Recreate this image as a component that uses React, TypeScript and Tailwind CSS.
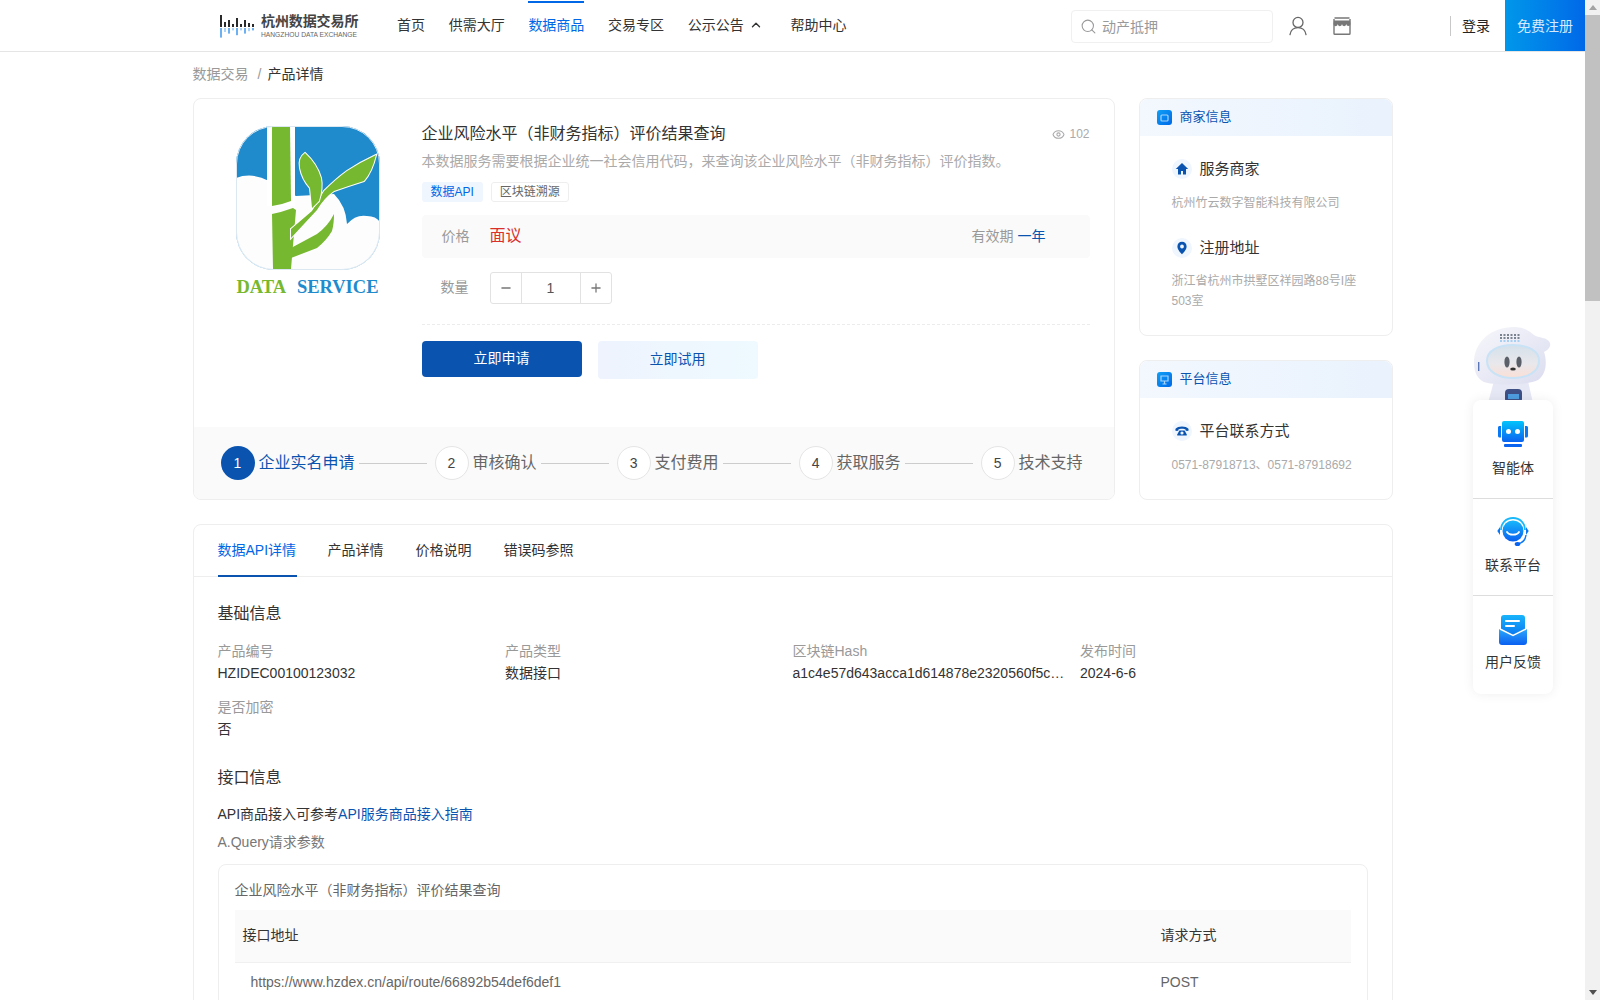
import { ChevronUp, Eye, Minus, Plus, Search } from "lucide-react";

const nav = ["首页", "供需大厅", "数据商品", "交易专区", "公示公告", "帮助中心"];
const steps = ["企业实名申请", "审核确认", "支付费用", "获取服务", "技术支持"];
const tabs = ["数据API详情", "产品详情", "价格说明", "错误码参照"];

function HeaderLogo() {
  const bars = [
    [0, 12], [4, 5], [8, 7], [12, 3], [16, 9], [20, 3], [24, 7], [28, 4], [32, 3],
  ];
  return (
    <svg width="36" height="26" viewBox="0 0 36 26" className="shrink-0">
      {bars.map(([x, h], i) => (
        <g key={i}>
          <rect x={x} y={14 - h} width="2" height={h} fill="#2a2a2a" />
          <rect x={x} y={15} width="2" height={h * 0.8} fill={i % 2 ? "#8cc4f5" : "#3d97ef"} opacity="0.75" />
        </g>
      ))}
    </svg>
  );
}

function UserIcon() {
  return (
    <svg width="18" height="20" viewBox="0 0 18 20" fill="none" stroke="#666" strokeWidth="1.3">
      <circle cx="9" cy="6.4" r="5" />
      <path d="M1 18.6c.6-4 3.6-7 8-7s7.4 3 8 7" strokeLinecap="round" />
    </svg>
  );
}

function StoreIcon() {
  return (
    <svg width="20" height="20" viewBox="0 0 20 20" fill="none" stroke="#777" strokeWidth="1.4">
      <path d="M2.5 2h15M2 3v14.400c0 .5.3.8.8.8h14.400c.5 0 .8-.3.8-.8V3" />
      <path
        d="M2 4.500h16L18.500 8a2.100 2.100 0 0 1-4.250 0 2.100 2.100 0 0 1-4.250 0 2.100 2.100 0 0 1-4.250 0A2.100 2.100 0 0 1 1.500 8z"
        fill="#777"
        stroke="none"
      />
    </svg>
  );
}

function ProductImage() {
  return (
    <svg width="144" height="144" viewBox="0 0 144 144" className="block">
      <defs>
        <clipPath id="appclip">
          <rect width="144" height="144" rx="38" />
        </clipPath>
      </defs>
      <g clipPath="url(#appclip)">
        <rect width="144" height="144" fill="#1f8bcd" />
        <path d="M0 52Q16 46 33 55L60 70 98 68Q110 80 111 98 120 88 131 90 140 90 144 96V144H0Z" fill="#fdfdfd" />
        <path d="M31 0H59V80H31Z" fill="#fff" />
        <path d="M36 0H54L55 75Q45 79 36 80Z" fill="#76b82f" />
        <path d="M36 88Q46 86 57 82L60 84 55 143H37Z" fill="#76b82f" />
        <path d="M55 103 76 85Q83 74 88 65 100 53 111 45 125 36 140 29 136 46 128 55 112 60 98 65 88 72 81 84L55 112Z" fill="#76b82f" stroke="#fff" strokeWidth="2" paintOrder="stroke" />
        <path d="M55 122 81 108Q92 100 98 88 98 98 96 105 90 115 81 122L55 132Z" fill="#76b82f" />
        <path d="M69 27Q62 32 64 42 66 53 74 62L76 82 83 75Q87 62 85 52 81 38 69 27Z" fill="#76b82f" stroke="#fff" strokeWidth="2" paintOrder="stroke" />
      </g>
      <rect x="0.5" y="0.5" width="143" height="143" rx="37.5" fill="none" stroke="#dce8f1" />
    </svg>
  );
}

function Mascot() {
  return (
    <svg width="80" height="76" viewBox="0 0 80 76">
      <defs>
        <linearGradient id="visor" x1="0" y1="0" x2="0" y2="1">
          <stop offset="0" stopColor="#d5e0ea" />
          <stop offset="0.55" stopColor="#e8e8ec" />
          <stop offset="1" stopColor="#fbdfd6" />
        </linearGradient>
        <linearGradient id="shell" x1="0" y1="0" x2="1" y2="1">
          <stop offset="0" stopColor="#f7f7fb" />
          <stop offset="1" stopColor="#dadcef" />
        </linearGradient>
      </defs>
      <path d="M22 54h34l5 22H16z" fill="#e6e8f6" />
      <rect x="33" y="62" width="17" height="14" rx="4" fill="#3e5086" />
      <rect x="36" y="67" width="11" height="5" fill="#4e9de0" />
      <path d="M2 36C2 14 20 0 42 0c10 0 15 4 20 8 4 3 14 2 16 8 1 4-2 7-6 9 3 8 3 22-6 28-8 5-44 6-54 2C6 52 2 46 2 36z" fill="url(#shell)" />
      <path d="M15 34c0-11 12-16 26-16s26 5 26 16c0 11-12 17-26 17s-26-6-26-17z" fill="url(#visor)" stroke="#c8e2f6" strokeWidth="2" />
      <ellipse cx="35" cy="35" rx="2.600" ry="5.500" fill="#5a5f68" />
      <ellipse cx="47" cy="35" rx="2.600" ry="5.500" fill="#5a5f68" />
      <ellipse cx="41" cy="42" rx="2.800" ry="1.500" fill="#333" />
      <rect x="6" y="35" width="1.400" height="9" fill="#5a78b8" />
      <path d="M28 8h20M28 11h20" stroke="#7b8290" strokeWidth="2" strokeDasharray="2 1.500" />
      <path d="M28 14h20" stroke="#a5d0f3" strokeWidth="2" strokeDasharray="2 1.500" />
    </svg>
  );
}

function CardIcon({ kind }: { kind: "shop" | "screen" }) {
  return (
    <svg width="15" height="15" viewBox="0 0 15 15" className="shrink-0">
      <defs>
        <linearGradient id={`ci-${kind}`} x1="0" y1="0" x2="1" y2="1">
          <stop offset="0" stopColor="#0ea0f5" />
          <stop offset="1" stopColor="#0068e8" />
        </linearGradient>
      </defs>
      <rect width="15" height="15" rx="3" fill={`url(#ci-${kind})`} />
      {kind === "shop" ? (
        <rect x="4" y="5" width="7" height="6" rx="1" fill="none" stroke="#a6d4fb" strokeWidth="1.2" />
      ) : (
        <path d="M4 4h7v5H4zM7.500 9v3M5.500 12h4" fill="none" stroke="#a6d4fb" strokeWidth="1.2" />
      )}
    </svg>
  );
}

function RoundIcon({ kind }: { kind: "home" | "pin" | "phone" }) {
  return (
    <span className="flex h-5 w-5 shrink-0 items-center justify-center rounded-full bg-[#eff6fe]">
      <svg width="14" height="14" viewBox="0 0 14 14" fill="#0a54b0">
        {kind === "home" && <path d="M7 1 .8 7H3v5.500h3V9h2v3.500h3V7h2.200z" />}
        {kind === "pin" && (
          <path fillRule="evenodd" d="M7 .8C4.300.8 2.400 2.900 2.400 5.400c0 3.200 3.500 6.800 4.600 7.800 1.100-1 4.600-4.600 4.600-7.800C11.600 2.900 9.700.8 7 .8zm0 2.800a1.900 1.900 0 1 1 0 3.800 1.900 1.900 0 0 1 0-3.800z" />
        )}
        {kind === "phone" && (
          <path fillRule="evenodd" d="M7 2.600c-2.800 0-5 .8-6.200 1.900-.5.5-.5 1.800-.2 2.300.2.2 2.400.2 2.600 0 .2-.3.1-1.200.3-1.400.4-.4 2-.7 3.500-.7s3.100.3 3.500.7c.2.2.1 1.100.3 1.400.2.2 2.400.2 2.600 0 .3-.5.3-1.800-.2-2.300C12 3.400 9.800 2.600 7 2.600zM4.400 6.400 2.200 10.600c-.2.500 0 1 .6 1h8.400c.6 0 .8-.5.6-1L9.600 6.400zM7 7.400a1.600 1.600 0 1 1 0 3.200 1.600 1.600 0 0 1 0-3.200z" />
        )}
      </svg>
    </span>
  );
}

function RobotIcon() {
  return (
    <svg width="30" height="27" viewBox="0 0 30 27">
      <defs>
        <linearGradient id="rb" x1="0" y1="0" x2="0" y2="1">
          <stop offset="0" stopColor="#02c4fb" />
          <stop offset="1" stopColor="#0a62f0" />
        </linearGradient>
      </defs>
      <path d="M3 5H1.500C.7 5 0 5.700 0 6.500V15c0 .8.7 1.500 1.500 1.500H3zM27 5h1.500c.8 0 1.500.7 1.500 1.500V15c0 .8-.7 1.500-1.500 1.500H27z" fill="#0a78f5" />
      <rect x="4" y="0" width="22" height="21" rx="2" fill="url(#rb)" />
      <circle cx="10.500" cy="10.500" r="2.500" fill="#fff" />
      <circle cx="19.500" cy="10.500" r="2.500" fill="#fff" />
      <rect x="6" y="23" width="18" height="3" rx="1" fill="#0a62f0" />
    </svg>
  );
}

function HeadsetIcon() {
  return (
    <svg width="32" height="30" viewBox="0 0 32 30">
      <defs>
        <linearGradient id="hs" x1="0" y1="0" x2="0" y2="1">
          <stop offset="0" stopColor="#18b8fb" />
          <stop offset="1" stopColor="#0a5ff0" />
        </linearGradient>
      </defs>
      <path d="M4 13C4 6 9 1 16 1s12 5 12 12" fill="none" stroke="#18b8fb" strokeWidth="1.800" />
      <circle cx="16" cy="14" r="10.500" fill="url(#hs)" />
      <path d="M10 15c2 3.500 10 3.500 12 0" fill="none" stroke="#fff" strokeWidth="1.800" strokeLinecap="round" />
      <path d="M3 10 .3 14 3 18zM29 10l2.700 4L29 18z" fill="#0a78f5" />
      <path d="M29 18c-.5 5-4 8-8.500 9" fill="none" stroke="#0a78f5" strokeWidth="1.400" />
      <ellipse cx="20.500" cy="27" rx="2.800" ry="2" fill="#0a62f0" />
    </svg>
  );
}

function MailIcon() {
  return (
    <svg width="28" height="30" viewBox="0 0 28 30">
      <defs>
        <linearGradient id="mt" x1="0" y1="0" x2="0" y2="1">
          <stop offset="0" stopColor="#18b4fb" />
          <stop offset="1" stopColor="#0a72f0" />
        </linearGradient>
        <linearGradient id="mb" x1="0" y1="0" x2="0" y2="1">
          <stop offset="0" stopColor="#2aa8fb" />
          <stop offset="1" stopColor="#0a5ff0" />
        </linearGradient>
      </defs>
      <rect x="2" y="0" width="24" height="22" rx="3" fill="url(#mt)" />
      <rect x="6" y="5" width="15" height="2" rx="1" fill="#fff" />
      <rect x="6" y="10" width="10" height="2" rx="1" fill="#fff" />
      <path d="M0 14 14 21 28 14V27c0 1.700-1.300 3-3 3H3c-1.700 0-3-1.300-3-3z" fill="url(#mb)" />
      <path d="M1 14 14 20.500 27 14" fill="none" stroke="#fff" strokeWidth="1.500" />
    </svg>
  );
}

function Field({ label, value }: { label: string; value: string }) {
  return (
    <div className="min-w-0">
      <div className="h-[22px] text-sm leading-[22px] text-[#999]">{label}</div>
      <div className="h-[22px] whitespace-nowrap text-sm leading-[22px] text-[#333]">{value}</div>
    </div>
  );
}

export default function App() {
  return (
    <div className="flex h-screen overflow-hidden bg-white font-['Liberation_Sans','Noto_Sans_CJK_SC',sans-serif] text-[#333]">
      <div className="relative min-w-0 flex-1 overflow-hidden">
        <header className="flex h-[52px] items-center border-b border-[#e5e5e5] pl-[220px]">
          <div className="flex w-[138px] shrink-0 items-center gap-[5px]">
            <HeaderLogo />
            <div className="whitespace-nowrap pt-[2px]">
              <div className="text-[14px] font-bold leading-[17px] tracking-[-0.1px] text-[#444]">杭州数据交易所</div>
              <div className="text-[6.7px] leading-[10px] text-[#666]">HANGZHOU DATA EXCHANGE</div>
            </div>
          </div>
          <nav className="ml-[39px] flex h-full items-center gap-[23.7px] pt-px text-sm">
            {nav.map((n) => (
              <a
                key={n}
                className={`flex h-full items-center gap-[5px] border-y-2 border-transparent pb-[2px] ${
                  n === "数据商品" ? "border-t-[#0067e6] text-[#0067e6]" : "text-[#333]"
                }`}
              >
                {n}
                {n === "公示公告" && <ChevronUp size={14} strokeWidth={2.4} className="mr-[4px]" />}
              </a>
            ))}
          </nav>
          <div className="ml-auto mt-[2px] flex h-[33px] w-[202px] items-center gap-[5px] rounded border border-[#f0f0f0] pl-[8px] text-sm text-[#999]">
            <Search size={17} strokeWidth={1.5} className="text-[#999]" />
            动产抵押
          </div>
          <div className="ml-[15px] flex w-5 justify-center">
            <UserIcon />
          </div>
          <div className="ml-6 flex w-5 justify-center">
            <StoreIcon />
          </div>
          <div className="ml-[98px] h-5 w-px bg-[#c8c8c8]" />
          <div className="ml-[11px] text-sm text-[#222]">登录</div>
          <div className="ml-[15px] flex h-full w-20 items-center justify-center bg-gradient-to-r from-[#0097ea] to-[#0068e8] text-sm text-[#d5eafc]">
            免费注册
          </div>
        </header>

        <main className="mx-auto w-[1200px]">
          <div className="flex h-[46px] items-center pb-[2px] text-sm">
            <span className="text-[#999]">数据交易</span>
            <span className="ml-[9px] mr-[6px] text-[#999]">/</span>
            <span className="text-[#333]">产品详情</span>
          </div>

          <div className="flex h-[402px] gap-6">
            <section className="flex w-[922px] flex-col overflow-hidden rounded-lg border border-[#eeeeee]">
              <div className="flex flex-1">
                <div className="ml-[42px] mt-[27px] w-[144px] shrink-0">
                  <ProductImage />
                  <div className="mt-[6px] flex justify-between px-[1px] font-['Liberation_Serif',serif] text-[18.5px] font-bold leading-[22px]">
                    <span className="text-[#76b82f]">DATA</span>
                    <span className="text-[#1f8bcd]">SERVICE</span>
                  </div>
                </div>
                <div className="ml-[42px] mr-6 min-w-0 flex-1 pt-[23px]">
                  <div className="flex h-6 items-center justify-between">
                    <h1 className="text-base font-normal text-[#333]">企业风险水平（非财务指标）评价结果查询</h1>
                    <div className="flex items-center gap-1 text-xs text-[#aaa]">
                      <Eye size={13} />
                      102
                    </div>
                  </div>
                  <p className="mt-[4px] h-[22px] text-sm leading-[22px] text-[#aaa]">
                    本数据服务需要根据企业统一社会信用代码，来查询该企业风险水平（非财务指标）评价指数。
                  </p>
                  <div className="mt-[10px] flex h-5 gap-2 text-xs">
                    <span className="flex items-center rounded-[3px] bg-[#f0f6fe] px-[9px] text-[#0067e6]">数据API</span>
                    <span className="flex items-center rounded-[3px] border border-[#eeeeee] px-2 text-[#666]">区块链溯源</span>
                  </div>
                  <div className="mt-[13px] flex h-[43px] items-center rounded bg-[#fafafa] pb-[2px] pl-[20px] pr-[44px]">
                    <span className="w-[48px] text-sm text-[#999]">价格</span>
                    <span className="text-base text-[#d9302a]">面议</span>
                    <span className="ml-auto text-sm text-[#999]">
                      有效期 <span className="text-[#0a54b0]">一年</span>
                    </span>
                  </div>
                  <div className="mt-[14px] flex items-center pl-[19px]">
                    <span className="w-[49px] pb-[2px] text-sm text-[#999]">数量</span>
                    <div className="flex h-8 w-[122px] items-stretch rounded-[3px] border border-[#e2e2e2] text-sm">
                      <span className="flex w-[31px] items-center justify-center border-r border-[#e2e2e2] text-[#777]">
                        <Minus size={14} strokeWidth={2.2} />
                      </span>
                      <span className="flex flex-1 items-center justify-center text-[#555]">1</span>
                      <span className="flex w-[31px] items-center justify-center border-l border-[#e2e2e2] text-[#777]">
                        <Plus size={14} strokeWidth={2.2} />
                      </span>
                    </div>
                  </div>
                  <div className="mt-[20px] border-t border-dashed border-[#ececec]" />
                  <div className="mt-4 flex items-start gap-4 text-sm">
                    <button className="flex h-9 w-40 items-center justify-center rounded bg-[#0a54b0] pb-[2px] text-white">立即申请</button>
                    <button className="flex h-[38px] w-40 items-center justify-center rounded bg-gradient-to-r from-[#eef3fd] to-[#eefaff] pb-[3px] text-[#0a54b0]">
                      立即试用
                    </button>
                  </div>
                </div>
              </div>
              <div className="flex h-[72px] shrink-0 items-center bg-[#fafafa] pl-[27px]">
                {steps.map((s, i) => (
                  <div key={s} className="flex items-center">
                    <span
                      className={`flex h-[34px] w-[34px] items-center justify-center rounded-full text-sm ${
                        i === 0 ? "bg-[#0a54b0] text-white" : "border border-[#e5e5e5] bg-white text-[#444]"
                      }`}
                    >
                      {i + 1}
                    </span>
                    <span className={`ml-1 text-base ${i === 0 ? "text-[#0a54b0]" : "text-[#666]"}`}>{s}</span>
                    {i < 4 && <span className="ml-[4px] mr-2 h-px w-[68px] bg-[#cccccc]" />}
                  </div>
                ))}
              </div>
            </section>

            <aside className="flex min-w-0 flex-1 flex-col gap-[24px]">
              <div className="h-[238px] rounded-lg border border-[#eeeeee]">
                <div className="flex h-[37px] items-center gap-[8px] rounded-t-lg bg-gradient-to-r from-[#f3f8fe] to-[#e9f2fd] pl-[17px] text-[13px] text-[#0a54b0]">
                  <CardIcon kind="shop" />
                  <span className="-translate-y-px">商家信息</span>
                </div>
                <div className="px-8 pt-[23px]">
                  <div className="flex items-center gap-2 text-[15px] leading-5">
                    <RoundIcon kind="home" />
                    服务商家
                  </div>
                  <p className="mt-[14px] text-xs leading-5 text-[#aaa]">杭州竹云数字智能科技有限公司</p>
                  <div className="mt-[25px] flex items-center gap-2 text-[15px] leading-5">
                    <RoundIcon kind="pin" />
                    注册地址
                  </div>
                  <p className="mt-[13px] text-xs leading-5 text-[#aaa]">浙江省杭州市拱墅区祥园路88号I座503室</p>
                </div>
              </div>
              <div className="min-h-0 flex-1 rounded-lg border border-[#eeeeee]">
                <div className="flex h-[37px] items-center gap-[8px] rounded-t-lg bg-gradient-to-r from-[#f3f8fe] to-[#e9f2fd] pl-[17px] text-[13px] text-[#0a54b0]">
                  <CardIcon kind="screen" />
                  <span className="-translate-y-px">平台信息</span>
                </div>
                <div className="px-8 pt-[23px]">
                  <div className="flex items-center gap-2 text-[15px] leading-5">
                    <RoundIcon kind="phone" />
                    平台联系方式
                  </div>
                  <p className="mt-[14px] whitespace-nowrap text-xs leading-5 text-[#aaa]">0571-87918713、0571-87918692</p>
                </div>
              </div>
            </aside>
          </div>

          <section className="mt-[24px] rounded-t-lg border border-[#eeeeee]">
            <div className="flex h-[52px] gap-8 border-b border-[#eeeeee] pl-6 text-sm">
              {tabs.map((t, i) => (
                <a
                  key={t}
                  className={`flex items-center border-b-2 ${
                    i === 0 ? "-mb-px -mr-px w-[79px] border-[#0a54b0] text-[#0067e6]" : "border-transparent text-[#333]"
                  }`}
                >
                  {t}
                </a>
              ))}
            </div>
            <div className="px-6 pt-[25px]">
              <h2 className="h-6 text-base font-normal leading-6 text-[#333]">基础信息</h2>
              <div className="mt-[14px] grid grid-cols-4 gap-y-3">
                <Field label="产品编号" value="HZIDEC00100123032" />
                <Field label="产品类型" value="数据接口" />
                <Field label="区块链Hash" value="a1c4e57d643acca1d614878e2320560f5c…" />
                <Field label="发布时间" value="2024-6-6" />
                <Field label="是否加密" value="否" />
              </div>
              <h2 className="mt-[26px] h-6 text-base font-normal leading-6 text-[#333]">接口信息</h2>
              <p className="mt-[13px] h-[22px] text-sm leading-[22px] text-[#333]">
                API商品接入可参考<a className="text-[#0a54b0]">API服务商品接入指南</a>
              </p>
              <p className="mt-[6px] h-[22px] text-sm leading-[22px] text-[#777]">A.Query请求参数</p>
              <div className="mt-[11px] rounded-t-lg border border-[#eeeeee] px-4 pt-[14px]">
                <div className="h-[22px] text-sm leading-[22px] text-[#666]">企业风险水平（非财务指标）评价结果查询</div>
                <div className="mt-[9px] grid grid-cols-[919px_1fr] border-b border-[#f0f0f0] bg-[#fafafa] text-sm text-[#333]">
                  <div className="flex h-[52px] items-center pb-[2px] pl-2">接口地址</div>
                  <div className="flex h-[52px] items-center pb-[2px] pl-[7px]">请求方式</div>
                </div>
                <div className="grid grid-cols-[919px_1fr] text-sm text-[#666]">
                  <div className="flex h-[38px] items-center pl-4">https://www.hzdex.cn/api/route/66892b54def6def1</div>
                  <div className="flex h-[38px] items-center pl-[7px]">POST</div>
                </div>
              </div>
            </div>
          </section>
        </main>

        <div className="absolute right-[33px] top-[327px] z-10">
          <Mascot />
        </div>
        <div className="absolute right-[32px] top-[400px] z-20 flex w-[80px] flex-col rounded-lg bg-white text-sm text-[#333] shadow-[0_0_12px_rgba(0,0,0,0.07)]">
          <div className="flex h-[99px] flex-col items-center border-b border-[#dddddd] pt-[21px]">
            <RobotIcon />
            <span className="mt-[10px]">智能体</span>
          </div>
          <div className="flex h-[97px] flex-col items-center border-b border-[#dddddd] pt-[18px]">
            <HeadsetIcon />
            <span className="mt-[8px]">联系平台</span>
          </div>
          <div className="flex h-[98px] flex-col items-center pt-[19px]">
            <MailIcon />
            <span className="mt-[7px]">用户反馈</span>
          </div>
        </div>
      </div>

      <div className="flex w-[15px] shrink-0 flex-col bg-[#f1f1f1]">
        <div className="flex h-[15px] items-center justify-center">
          <span className="h-0 w-0 border-x-[4px] border-b-[5px] border-x-transparent border-b-[#a3a3a3]" />
        </div>
        <div className="h-[286px] bg-[#c1c1c1]" />
        <div className="flex-1" />
        <div className="flex h-[15px] items-center justify-center">
          <span className="h-0 w-0 border-x-[4px] border-t-[5px] border-x-transparent border-t-[#505050]" />
        </div>
      </div>
    </div>
  );
}
